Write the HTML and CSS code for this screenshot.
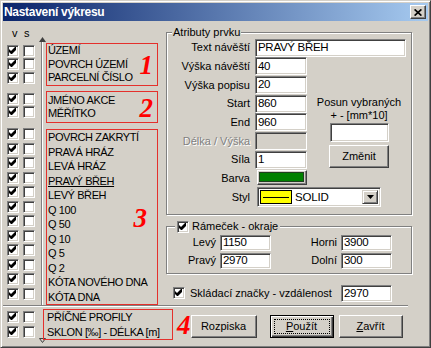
FILE: index.html
```html
<!DOCTYPE html>
<html lang="cs">
<head>
<meta charset="utf-8">
<title>Nastavení výkresu</title>
<link rel="stylesheet" href="styles.css">
</head>
<body>
<div class="window">
  <div class="titlebar">
    <span class="title">Nastavení výkresu</span>
    <span class="close-btn"><svg class="close-x" width="8" height="7" viewBox="0 0 8 7"><path d="M0.6 0.4L7.4 6.6M7.4 0.4L0.6 6.6" stroke="#000" stroke-width="1.7"/></svg></span>
  </div>
  <div class="client">
    <div class="top">
      <div class="left-pane">
        <div class="cb-col">
          <div class="vs-head"><span>v</span><span>s</span></div>
          <div class="cb-group tight">
            <div class="cb-row"><span class="cb"><svg class="chk" width="7" height="7" viewBox="0 0 7 7"><path d="M0 2L2 4L6 0H7V3L3 7H2L0 5Z"/></svg></span><span class="cb"></span></div>
            <div class="cb-row"><span class="cb"><svg class="chk" width="7" height="7" viewBox="0 0 7 7"><path d="M0 2L2 4L6 0H7V3L3 7H2L0 5Z"/></svg></span><span class="cb"></span></div>
            <div class="cb-row"><span class="cb"><svg class="chk" width="7" height="7" viewBox="0 0 7 7"><path d="M0 2L2 4L6 0H7V3L3 7H2L0 5Z"/></svg></span><span class="cb"></span></div>
          </div>
          <div class="cb-group tight g2">
            <div class="cb-row"><span class="cb"><svg class="chk" width="7" height="7" viewBox="0 0 7 7"><path d="M0 2L2 4L6 0H7V3L3 7H2L0 5Z"/></svg></span><span class="cb"></span></div>
            <div class="cb-row"><span class="cb"><svg class="chk" width="7" height="7" viewBox="0 0 7 7"><path d="M0 2L2 4L6 0H7V3L3 7H2L0 5Z"/></svg></span><span class="cb"></span></div>
          </div>
          <div class="cb-group loose g3">
            <div class="cb-row"><span class="cb"><svg class="chk" width="7" height="7" viewBox="0 0 7 7"><path d="M0 2L2 4L6 0H7V3L3 7H2L0 5Z"/></svg></span><span class="cb"></span></div>
            <div class="cb-row"><span class="cb"><svg class="chk" width="7" height="7" viewBox="0 0 7 7"><path d="M0 2L2 4L6 0H7V3L3 7H2L0 5Z"/></svg></span><span class="cb"></span></div>
            <div class="cb-row"><span class="cb"><svg class="chk" width="7" height="7" viewBox="0 0 7 7"><path d="M0 2L2 4L6 0H7V3L3 7H2L0 5Z"/></svg></span><span class="cb"></span></div>
            <div class="cb-row"><span class="cb"><svg class="chk" width="7" height="7" viewBox="0 0 7 7"><path d="M0 2L2 4L6 0H7V3L3 7H2L0 5Z"/></svg></span><span class="cb"></span></div>
            <div class="cb-row"><span class="cb"><svg class="chk" width="7" height="7" viewBox="0 0 7 7"><path d="M0 2L2 4L6 0H7V3L3 7H2L0 5Z"/></svg></span><span class="cb"></span></div>
            <div class="cb-row"><span class="cb"><svg class="chk" width="7" height="7" viewBox="0 0 7 7"><path d="M0 2L2 4L6 0H7V3L3 7H2L0 5Z"/></svg></span><span class="cb"></span></div>
            <div class="cb-row"><span class="cb"><svg class="chk" width="7" height="7" viewBox="0 0 7 7"><path d="M0 2L2 4L6 0H7V3L3 7H2L0 5Z"/></svg></span><span class="cb"></span></div>
            <div class="cb-row"><span class="cb"><svg class="chk" width="7" height="7" viewBox="0 0 7 7"><path d="M0 2L2 4L6 0H7V3L3 7H2L0 5Z"/></svg></span><span class="cb"></span></div>
            <div class="cb-row"><span class="cb"><svg class="chk" width="7" height="7" viewBox="0 0 7 7"><path d="M0 2L2 4L6 0H7V3L3 7H2L0 5Z"/></svg></span><span class="cb"></span></div>
            <div class="cb-row"><span class="cb"><svg class="chk" width="7" height="7" viewBox="0 0 7 7"><path d="M0 2L2 4L6 0H7V3L3 7H2L0 5Z"/></svg></span><span class="cb"></span></div>
            <div class="cb-row"><span class="cb"><svg class="chk" width="7" height="7" viewBox="0 0 7 7"><path d="M0 2L2 4L6 0H7V3L3 7H2L0 5Z"/></svg></span><span class="cb"></span></div>
            <div class="cb-row"><span class="cb"><svg class="chk" width="7" height="7" viewBox="0 0 7 7"><path d="M0 2L2 4L6 0H7V3L3 7H2L0 5Z"/></svg></span><span class="cb"></span></div>
          </div>
        </div>
        <div class="track">
          <svg class="tri" width="7" height="5" viewBox="0 0 7 5"><polygon points="3.5,0 7,5 0,5" fill="#404040"/></svg>
          <div class="track-line"></div>
        </div>
        <div class="lists">
          <div class="redbox tight">
            <ul class="items">
              <li>ÚZEMÍ</li>
              <li>POVRCH ÚZEMÍ</li>
              <li>PARCELNÍ ČÍSLO</li>
            </ul>
            <span class="num">1</span>
          </div>
          <div class="redbox tight g2">
            <ul class="items">
              <li>JMÉNO AKCE</li>
              <li>MĚŘÍTKO</li>
            </ul>
            <span class="num">2</span>
          </div>
          <div class="redbox loose g3">
            <ul class="items">
              <li>POVRCH ZAKRYTÍ</li>
              <li>PRAVÁ HRÁZ</li>
              <li>LEVÁ HRÁZ</li>
              <li class="sel">PRAVÝ BŘEH</li>
              <li>LEVÝ BŘEH</li>
              <li>Q 100</li>
              <li>Q 50</li>
              <li>Q 10</li>
              <li>Q 5</li>
              <li>Q 2</li>
              <li>KÓTA NOVÉHO DNA</li>
              <li>KÓTA DNA</li>
            </ul>
            <span class="num n3">3</span>
          </div>
        </div>
      </div>

      <div class="right-pane">
        <fieldset class="group attrs">
          <legend>Atributy prvku</legend>
          <div class="attr-grid">
            <span class="lbl">Text návěští</span><div class="field wide">PRAVÝ BŘEH</div>
            <span class="lbl">Výška návěští</span><div class="field">40</div>
            <span class="lbl">Výška popisu</span><div class="field">20</div>
            <span class="lbl">Start</span><div class="field">860</div>
            <div class="posun">
              <span class="posun-text">Posun vybraných</span>
              <span class="posun-text last">+ - [mm*10]</span>
              <div class="sunken posun-field"></div>
              <div class="btn posun-btn">Změnit</div>
            </div>
            <span class="lbl">End</span><div class="field">960</div>
            <span class="lbl disabled">Délka / Výška</span><div class="field off"></div>
            <span class="lbl">Síla</span><div class="field">1</div>
            <span class="lbl">Barva</span><div class="swatch"><span class="swatch-fill"></span></div>
            <span class="lbl">Styl</span>
            <div class="combo">
              <span class="line-swatch"><span class="line-stroke"></span></span>
              <span class="combo-text">SOLID</span>
              <span class="combo-btn"><svg width="7" height="4" viewBox="0 0 7 4"><polygon points="0,0 7,0 3.5,4" fill="#000"/></svg></span>
            </div>
          </div>
        </fieldset>

        <fieldset class="group frame">
          <legend><span class="legend-inner"><span class="cb"><svg class="chk" width="7" height="7" viewBox="0 0 7 7"><path d="M0 2L2 4L6 0H7V3L3 7H2L0 5Z"/></svg></span><span>Rámeček - okraje</span></span></legend>
          <div class="frame-grid">
            <span class="lbl">Levý</span><div class="sunken val">1150</div>
            <span class="lbl">Horni</span><div class="sunken val">3900</div>
            <span class="lbl">Pravý</span><div class="sunken val">2970</div>
            <span class="lbl">Dolní</span><div class="sunken val">300</div>
          </div>
        </fieldset>

        <div class="fold-row">
          <span class="cb"><svg class="chk" width="7" height="7" viewBox="0 0 7 7"><path d="M0 2L2 4L6 0H7V3L3 7H2L0 5Z"/></svg></span>
          <span class="fold-label">Skládací značky - vzdálenost</span>
          <div class="sunken val fold-field">2970</div>
        </div>
      </div>
    </div>

    <div class="separator"></div>

    <div class="bottom">
      <div class="cb-col">
        <div class="cb-group loose">
          <div class="cb-row"><span class="cb"><svg class="chk" width="7" height="7" viewBox="0 0 7 7"><path d="M0 2L2 4L6 0H7V3L3 7H2L0 5Z"/></svg></span><span class="cb"></span></div>
          <div class="cb-row"><span class="cb"><svg class="chk" width="7" height="7" viewBox="0 0 7 7"><path d="M0 2L2 4L6 0H7V3L3 7H2L0 5Z"/></svg></span><span class="cb"></span></div>
        </div>
      </div>
      <div class="track track-bottom">
        <svg class="tri" width="7" height="5" viewBox="0 0 7 5"><polygon points="0.5,0.5 6.5,0.5 3.5,4.5" fill="#d4d0c8" stroke="#404040" stroke-width="1"/></svg>
      </div>
      <div class="redbox loose g4">
        <ul class="items">
          <li>PŘÍČNÉ PROFILY</li>
          <li>SKLON [‰] - DÉLKA [m]</li>
        </ul>
      </div>
      <span class="num n4">4</span>
      <div class="buttons">
        <div class="btn b-rozpiska">Rozpiska</div>
        <div class="btn default b-pouzit"><span class="focus"><u>P</u>oužít</span></div>
        <div class="btn b-zavrit"><u>Z</u>avřít</div>
      </div>
    </div>
  </div>
</div>
</body>
</html>
```

FILE: styles.css
```css
* { box-sizing: border-box; }

html, body { margin: 0; padding: 0; }

body {
  width: 431px;
  height: 348px;
  overflow: hidden;
  background: #d4d0c8;
  font-family: "Liberation Sans", Arial, sans-serif;
  font-size: 11px;
  line-height: 13px;
  color: #000;
}

/* ---------- window frame ---------- */
.window {
  width: 431px;
  height: 348px;
  display: flex;
  flex-direction: column;
  background: #d4d0c8;
  border: 1px solid;
  border-color: #d4d0c8 #404040 #404040 #d4d0c8;
  box-shadow: inset 1px 1px #fff, inset -1px -1px #808080;
  padding: 2px;
}

.titlebar {
  height: 18px;
  flex: none;
  display: flex;
  align-items: center;
  justify-content: space-between;
  padding: 0 2px 0 1px;
  background: linear-gradient(to right, #0a246a, #a6caf0);
}

.title {
  color: #fff;
  font-weight: bold;
  font-size: 12px;
  line-height: 14px;
  letter-spacing: -0.3px;
  white-space: nowrap;
}

.close-btn {
  width: 16px;
  height: 14px;
  display: flex;
  align-items: center;
  justify-content: center;
  background: #d4d0c8;
  border: 1px solid;
  border-color: #fff #404040 #404040 #fff;
  box-shadow: inset -1px -1px #808080;
}

.close-x { display: block; }

.client {
  flex: 1;
  display: flex;
  flex-direction: column;
}

.top {
  height: 284px;
  flex: none;
  display: flex;
}

/* ---------- left list pane ---------- */
.left-pane {
  width: 156px;
  flex: none;
  display: flex;
}

.cb-col {
  width: 35px;
  flex: none;
}

.vs-head {
  height: 22px;
  display: flex;
  gap: 6.5px;
  padding: 6px 0 0 9px;
}

.cb-group { padding: 1px 0; }
.cb-group.g2 { margin-top: 5.5px; }
.cb-group.g3 { margin-top: 6px; }

.cb-row {
  display: flex;
  align-items: center;
  gap: 4px;
  padding-left: 4px;
}

.tight .cb-row { height: 13.5px; }
.loose .cb-row { height: 14.5px; }

.cb {
  display: block;
  flex: none;
  width: 12px;
  height: 12px;
  background: #fff;
  border: 1px solid;
  border-color: #808080 #fff #fff #808080;
  box-shadow: inset 1px 1px #404040, inset -1px -1px #d4d0c8;
}

.chk {
  display: block;
  margin: 1px 0 0 1px;
  fill: #000;
}

.track {
  width: 8px;
  flex: none;
  display: flex;
  flex-direction: column;
  align-items: flex-start;
  padding-top: 16px;
}

.tri {
  display: block;
  flex: none;
  margin-left: 1px;
}

.track-line {
  flex: 1;
  width: 2px;
  margin-left: 3px;
  border-left: 1px solid #808080;
  border-right: 1px solid #fff;
}

.lists {
  width: 113px;
  flex: none;
  padding-top: 22px;
}

.redbox {
  width: 112px;
  display: flex;
  align-items: center;
  border: 1px solid #e4302c;
  padding-left: 1px;
}

.redbox.g2 { margin-top: 5.5px; }
.redbox.g3 { margin-top: 6px; }

.items {
  list-style: none;
  margin: 0;
  padding: 0;
  flex: 1 1 0;
  min-width: 0;
}

.items li {
  white-space: nowrap;
  letter-spacing: -0.4px;
}

.tight .items li { height: 13.5px; line-height: 13.5px; }
.loose .items li { height: 14.5px; line-height: 14.5px; }

.items li.sel { text-decoration: underline; }

.num {
  flex: none;
  font-family: "Liberation Serif", "Times New Roman", serif;
  font-style: italic;
  font-weight: bold;
  font-size: 27px;
  line-height: 27px;
  color: #f00;
  margin: 3px 4px 0 0;
}

.num.n3 { margin-right: 10px; }

/* ---------- right pane ---------- */
.right-pane {
  flex: 1;
  padding: 0 16px 0 7px;
}

.group {
  margin: 0;
  padding: 0;
  min-width: 0;
  border: 1px solid #808080;
  box-shadow: 1px 1px 0 #fff, inset 1px 1px 0 #fff;
}

.group legend {
  background: #d4d0c8;
  line-height: 13px;
  white-space: nowrap;
}

.attrs {
  margin-top: 4.5px;
  padding: 0 5px 6.5px 0;
}

.attrs legend {
  margin-left: 5px;
  padding: 0 1px;
}

.attr-grid {
  display: grid;
  grid-template-columns: 83px 52px 1fr;
  grid-template-rows: repeat(7, 18.7px) 18px 20px;
  column-gap: 5px;
}

.lbl {
  text-align: right;
  align-self: center;
  white-space: nowrap;
}

.attr-grid > .lbl { grid-column: 1; }
.attr-grid > .field { grid-column: 2; }
.attr-grid > .field.wide { grid-column: 2 / 4; }

.lbl.disabled {
  color: #808080;
  text-shadow: 1px 1px 0 #fff;
}

.sunken,
.field {
  background: #fff;
  border: 1px solid;
  border-color: #808080 #fff #fff #808080;
  box-shadow: inset 1px 1px #404040, inset -1px -1px #d4d0c8;
}

.field {
  height: 18px;
  align-self: start;
  display: flex;
  align-items: center;
  padding: 0 2px;
  font-size: 11.5px;
  letter-spacing: -0.3px;
  white-space: nowrap;
}

.field.off { background: #d4d0c8; }

.posun {
  grid-column: 3;
  grid-row: 4 / 8;
  display: flex;
  flex-direction: column;
  align-items: center;
  justify-content: flex-end;
  padding-bottom: 1px;
}

.posun-text {
  line-height: 12.5px;
  white-space: nowrap;
}

.posun-text.last { margin-bottom: 2px; }

.posun-field {
  width: 59px;
  height: 19px;
  margin-bottom: 3px;
}

.posun-btn {
  width: 60px;
  height: 18px;
}

.swatch {
  grid-column: 2;
  align-self: start;
  margin: 1px 0 0 2px;
  width: 50px;
  height: 15px;
  border: 1px solid;
  border-color: #fff #404040 #404040 #fff;
  box-shadow: inset -1px -1px #808080;
  padding: 1px 2px 2px 1px;
}

.swatch-fill {
  display: block;
  height: 100%;
  background: #008000;
  border: 1px solid #1f3f1f;
}

.combo {
  grid-column: 2 / 4;
  align-self: start;
  margin-left: 2px;
  width: 124px;
  height: 20px;
  display: flex;
  padding: 1px;
  background: #fff;
  border: 1px solid;
  border-color: #808080 #fff #fff #808080;
  box-shadow: inset 1px 1px #404040, inset -1px -1px #d4d0c8;
}

.line-swatch {
  width: 32px;
  margin: 1px 0 1px 1px;
  display: flex;
  align-items: center;
  justify-content: center;
  background: #ffff00;
  border: 1px solid #000;
}

.line-stroke {
  display: block;
  width: 26px;
  height: 1px;
  background: #000;
}

.combo-text {
  align-self: center;
  margin-left: 3px;
  font-size: 11.5px;
  letter-spacing: -0.2px;
}

.combo-btn {
  margin: 1px 1px 1px auto;
  width: 16px;
  display: flex;
  align-items: center;
  justify-content: center;
  background: #d4d0c8;
  border: 1px solid;
  border-color: #d4d0c8 #404040 #404040 #d4d0c8;
  box-shadow: inset 1px 1px #fff, inset -1px -1px #808080;
}

.combo-btn svg { display: block; }

/* frame group */
.frame {
  margin-top: 5.5px;
  padding: 1.5px 0 4px 0;
}

.frame legend {
  margin-left: 8px;
  padding: 0 2px;
}

.legend-inner {
  display: inline-flex;
  align-items: center;
  gap: 3px;
  vertical-align: top;
}

.frame-grid {
  display: grid;
  grid-template-columns: 49px 51px 62px 51px;
  grid-auto-rows: 16px;
  column-gap: 4px;
  row-gap: 2px;
}

.val {
  display: flex;
  align-items: center;
  padding: 0 2px;
  font-size: 11.5px;
  letter-spacing: -0.3px;
}

.fold-row {
  margin-top: 11px;
  height: 17px;
  display: flex;
  align-items: center;
  padding-left: 7px;
}

.fold-label {
  margin-left: 5px;
  white-space: nowrap;
}

.fold-field {
  width: 51px;
  height: 17px;
  margin-left: auto;
  margin-right: 20px;
}

/* ---------- separator + bottom ---------- */
.separator {
  height: 2px;
  flex: none;
  margin-right: 20px;
  border-top: 1px solid #808080;
  border-bottom: 1px solid #fff;
}

.bottom {
  flex: 1;
  display: flex;
  align-items: flex-start;
  padding-top: 2px;
}

.track-bottom {
  align-self: stretch;
  justify-content: flex-end;
  padding: 0 0 2px 0;
}

.redbox.g4 {
  width: 130px;
  margin-left: -3px;
  padding-left: 3px;
}

.num.n4 { margin: 3.2px 0 0 4px; }

.buttons {
  display: flex;
  margin-top: 6px;
}

.btn {
  height: 23px;
  display: flex;
  align-items: center;
  justify-content: center;
  background: #d4d0c8;
  border: 1px solid;
  border-color: #fff #404040 #404040 #fff;
  box-shadow: inset -1px -1px #808080;
  white-space: nowrap;
}

.btn.default {
  border-color: #000;
  box-shadow: inset 1px 1px #fff, inset -1px -1px #404040, inset -2px -2px #808080;
  padding: 3px;
}

.focus {
  flex: 1;
  align-self: stretch;
  display: flex;
  align-items: center;
  justify-content: center;
  border: 1px dotted #000;
}

.b-rozpiska { width: 66px; }
.b-pouzit { width: 64px; margin-left: 13px; }
.b-zavrit { width: 64px; margin-left: 5px; }
```
